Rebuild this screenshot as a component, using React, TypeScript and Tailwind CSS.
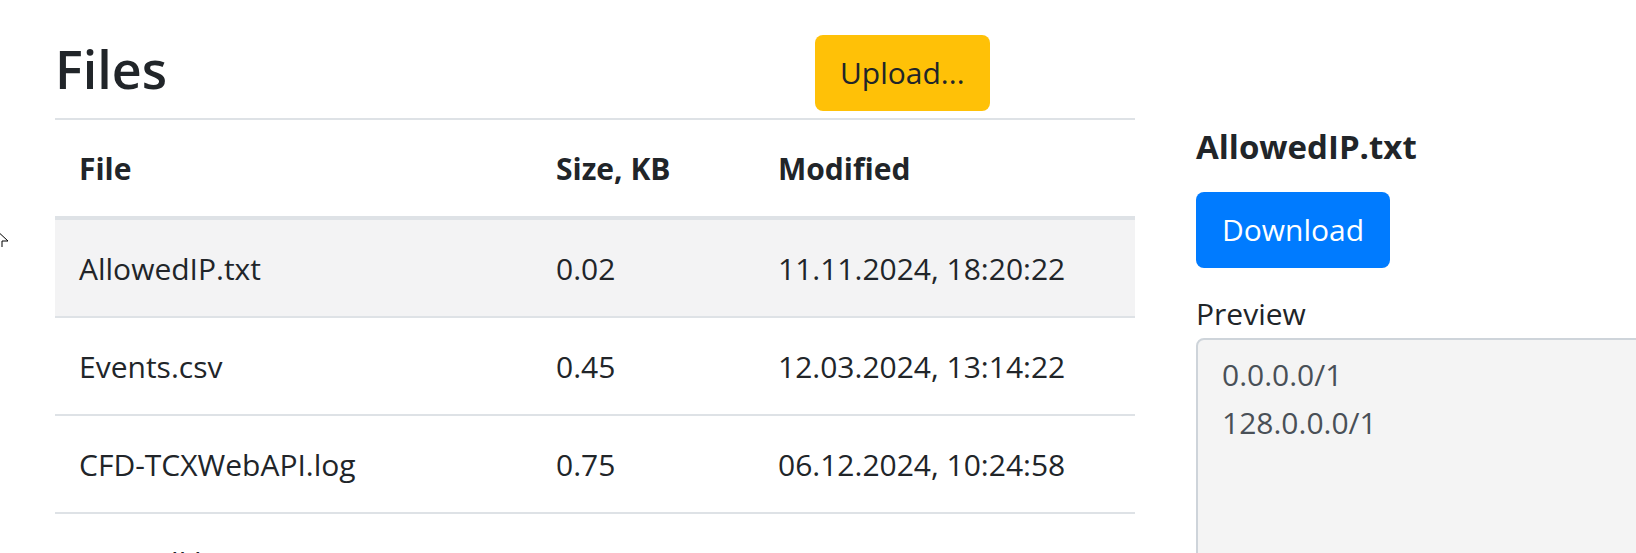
import React from "react";

const rows = [
  { name: "AllowedIP.txt", size: "0.02", modified: "11.11.2024, 18:20:22" },
  { name: "Events.csv", size: "0.45", modified: "12.03.2024, 13:14:22" },
  { name: "CFD-TCXWebAPI.log", size: "0.75", modified: "06.12.2024, 10:24:58" },
  { name: "Firewall.log", size: "1.20", modified: "20.10.2024, 17:10:12" },
];

export default function App() {
  return (
    <div
      className="relative h-[553px] overflow-hidden bg-white text-[#212529]"
      style={{ fontFamily: '"Open Sans", "Noto Sans", sans-serif' }}
    >
      {/* mouse pointer remnant */}
      <svg className="absolute left-0 top-[228px]" width="12" height="24" viewBox="0 0 12 24">
        <path d="M-6 0 L8 13 L2 13 L2 19" fill="white" stroke="black" strokeWidth="1" />
      </svg>

      <div className="flex gap-[61px] pl-[55px]">
        {/* Files list */}
        <div className="w-[1080px] shrink-0">
          <div className="flex h-[118px] items-start pt-[35px]">
            <h3 className="w-[760px] text-[52px] font-semibold leading-[67px]">Files</h3>
            <button className="h-[76px] rounded-[8px] bg-[#ffc107] px-[25px] text-[30px] leading-[48px] text-[#212529]">
              Upload...
            </button>
          </div>

          <table className="w-full table-fixed border-collapse text-[30px] leading-[48px]">
            <colgroup>
              <col className="w-[477px]" />
              <col className="w-[222px]" />
              <col className="w-[381px]" />
            </colgroup>
            <thead>
              <tr>
                <th className="border-t-2 border-b-4 border-[#dee2e6] px-[24px] pt-[25px] pb-[23px] text-left font-bold">File</th>
                <th className="border-t-2 border-b-4 border-[#dee2e6] px-[24px] pt-[25px] pb-[23px] text-left font-bold">Size, KB</th>
                <th className="border-t-2 border-b-4 border-[#dee2e6] px-[24px] pt-[25px] pb-[23px] text-left font-bold">Modified</th>
              </tr>
            </thead>
            <tbody>
              {rows.map((r, i) => (
                <tr key={r.name} className={i === 0 ? "bg-[#f3f3f4]" : ""}>
                  <td className="border-t-2 border-[#dee2e6] px-[24px] pt-[25px] pb-[23px] whitespace-nowrap">{r.name}</td>
                  <td className="border-t-2 border-[#dee2e6] px-[24px] pt-[25px] pb-[23px]">{r.size}</td>
                  <td className="border-t-2 border-[#dee2e6] px-[24px] pt-[25px] pb-[23px] whitespace-nowrap">{r.modified}</td>
                </tr>
              ))}
            </tbody>
          </table>
        </div>

        {/* Selected file */}
        <div className="flex min-w-[600px] flex-col items-start pt-[123px]">
          <h5 className="text-[33px] font-bold leading-[48px]">AllowedIP.txt</h5>
          <button className="mt-[21px] h-[76px] rounded-[8px] bg-[#007bff] px-[26px] text-[30px] leading-[48px] text-white">
            Download
          </button>
          <label className="mt-[22px] text-[30px] leading-[48px]">Preview</label>
          <textarea
            readOnly
            className="h-[320px] w-[600px] resize-none rounded-[8px] border-2 border-[#ced4da] bg-[#f4f4f4] px-[24px] pt-[11px] pb-[12px] text-[30px] leading-[48px] text-[#495057] outline-none"
            value={"0.0.0.0/1\n128.0.0.0/1"}
          />
        </div>
      </div>
    </div>
  );
}
